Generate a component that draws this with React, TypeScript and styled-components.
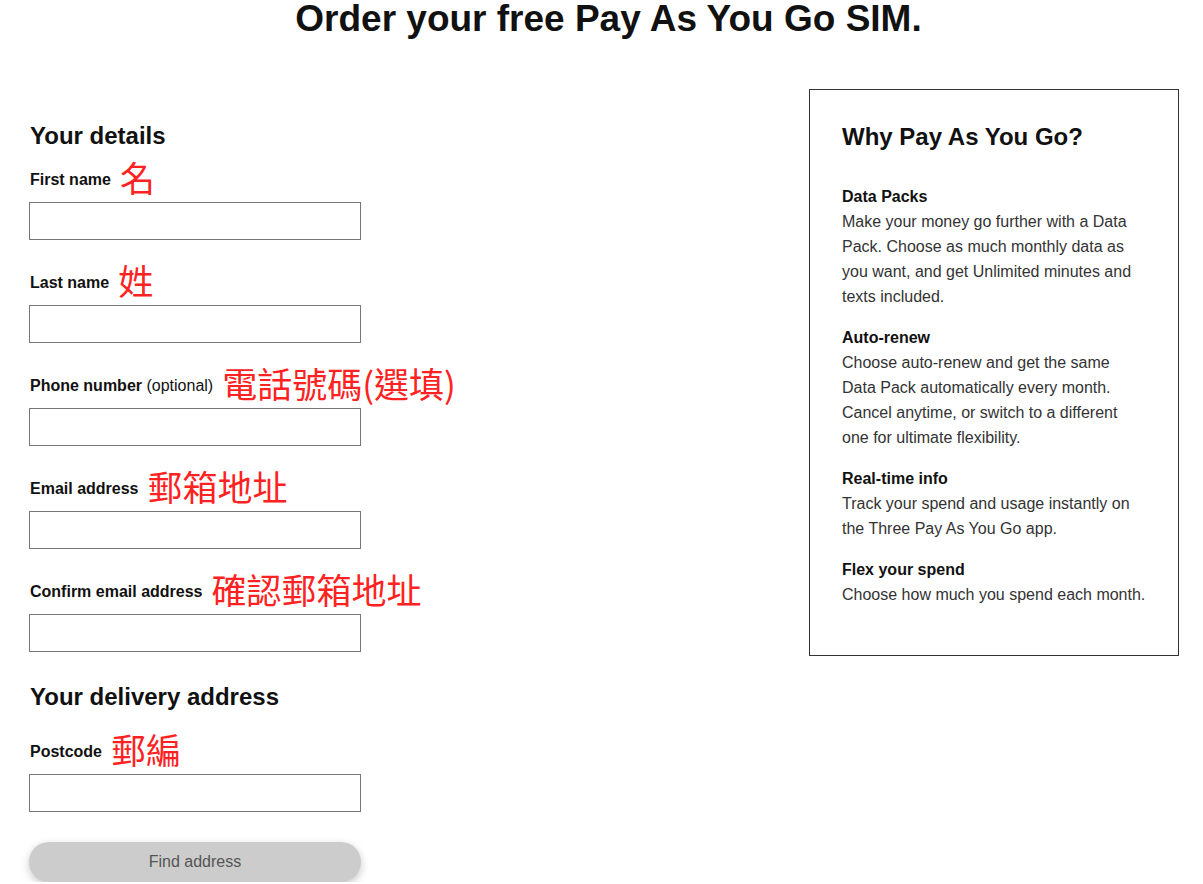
import React from 'react';
import styled, { createGlobalStyle } from 'styled-components';

const GlobalStyle = createGlobalStyle`
    body{
        margin:0;
        background:#fff;
        font-family:"Liberation Sans", Arial, "Noto Sans CJK TC", sans-serif;
        color:#111;
    }
`;

const Page = styled.div`
    padding:0 24px 0 30px;
    width:1203px;
    box-sizing:border-box;
`;

const Title = styled.h1`
    margin:0;
    padding-left:8px;
    font-size:37px;
    line-height:38px;
    font-weight:bold;
    text-align:center;
    color:#111;
`;

const Columns = styled.div`
    display:flex;
    justify-content:space-between;
    align-items:flex-start;
    margin-top:51px;
`;

const FormColumn = styled.form`
    width:332px;
    padding-top:33px;
    display:flex;
    flex-direction:column;
`;

const SectionTitle = styled.h2<{ $gap?: number }>`
    margin:${p => p.$gap ?? 0}px 0 0;
    font-size:24px;
    line-height:28px;
    font-weight:bold;
    color:#111;
`;

const Field = styled.div<{ $gap: number }>`
    margin-top:${p => p.$gap}px;
    display:flex;
    flex-direction:column;
    gap:5px;
`;

const LabelRow = styled.div`
    height:36px;
    display:flex;
    align-items:center;
    gap:9px;
    white-space:nowrap;
`;

const Label = styled.label`
    padding-top:2px;
    font-size:16px;
    font-weight:bold;
    color:#111;
    span{
        font-weight:normal;
    }
`;

const Note = styled.span`
    font-family:"Noto Sans CJK TC", "Noto Sans CJK SC", sans-serif;
    font-size:35px;
    line-height:35px;
    color:#ff2222;
    margin-bottom:6px;
`;

const TextInput = styled.input`
    width:332px;
    height:38px;
    margin-left:-1px;
    box-sizing:border-box;
    border:1px solid #767676;
    border-radius:0;
    padding:0 10px;
    font-size:16px;
    outline:none;
    &:focus{
        border-color:#333;
    }
`;

const FindButton = styled.button`
    margin-top:30px;
    margin-left:-1px;
    width:332px;
    height:40px;
    border:none;
    border-radius:20px;
    background:#cccccc;
    color:#555;
    font-family:"Liberation Sans", Arial, sans-serif;
    font-size:16px;
    box-shadow:0 3px 8px rgba(0,0,0,0.22);
    cursor:pointer;
`;

const InfoBox = styled.aside`
    width:370px;
    box-sizing:border-box;
    border:1px solid #333;
    padding:33px 31px 48px 32px;
`;

const InfoTitle = styled.h2`
    margin:0 0 33px;
    font-size:24px;
    line-height:28px;
    font-weight:bold;
    color:#111;
`;

const InfoItem = styled.div`
    font-size:16px;
    line-height:25px;
    color:#333;
    & + &{
        margin-top:16px;
    }
    h3{
        margin:0;
        font-size:16px;
        line-height:25px;
        font-weight:bold;
        color:#111;
    }
    p{
        margin:0;
    }
`;

type FieldDef = {
    label: string,
    optional?: boolean,
    note: string,
    type?: string,
}

const details: FieldDef[] = [
    { label: 'First name', note: '名' },
    { label: 'Last name', note: '姓' },
    { label: 'Phone number', optional: true, note: '電話號碼(選填)', type: 'tel' },
    { label: 'Email address', note: '郵箱地址', type: 'email' },
    { label: 'Confirm email address', note: '確認郵箱地址', type: 'email' },
];

const reasons = [
    { title: 'Data Packs', text: 'Make your money go further with a Data Pack. Choose as much monthly data as you want, and get Unlimited minutes and texts included.' },
    { title: 'Auto-renew', text: 'Choose auto-renew and get the same Data Pack automatically every month. Cancel anytime, or switch to a different one for ultimate flexibility.' },
    { title: 'Real-time info', text: 'Track your spend and usage instantly on the Three Pay As You Go app.' },
    { title: 'Flex your spend', text: 'Choose how much you spend each month.' },
];

const FormField = ({ def, gap }: { def: FieldDef, gap: number }) => (
    <Field $gap={gap}>
        <LabelRow>
            <Label>
                {def.label}
                {def.optional && <span> (optional)</span>}
            </Label>
            <Note>{def.note}</Note>
        </LabelRow>
        <TextInput type={def.type ?? 'text'} />
    </Field>
);

const App = () => {
    return (
        <Page>
            <GlobalStyle />
            <Title>Order your free Pay As You Go SIM.</Title>
            <Columns>
                <FormColumn onSubmit={e => e.preventDefault()}>
                    <SectionTitle>Your details</SectionTitle>
                    {details.map((d, i) => (
                        <FormField key={d.label} def={d} gap={i === 0 ? 11 : 24} />
                    ))}
                    <SectionTitle $gap={31}>Your delivery address</SectionTitle>
                    <FormField def={{ label: 'Postcode', note: '郵編' }} gap={22} />
                    <FindButton type="button">Find address</FindButton>
                </FormColumn>
                <InfoBox>
                    <InfoTitle>Why Pay As You Go?</InfoTitle>
                    {reasons.map(r => (
                        <InfoItem key={r.title}>
                            <h3>{r.title}</h3>
                            <p>{r.text}</p>
                        </InfoItem>
                    ))}
                </InfoBox>
            </Columns>
        </Page>
    );
};

export default App;
